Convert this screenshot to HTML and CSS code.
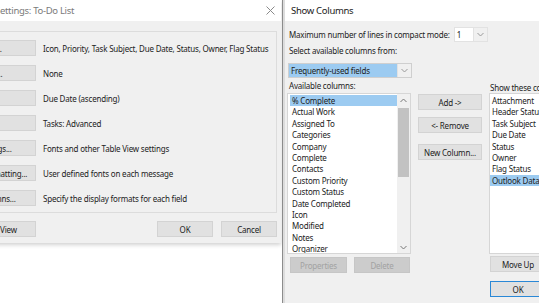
FILE: index.html
```html
<!DOCTYPE html>
<html lang="en">
<head>
  <meta charset="UTF-8">
  <title>Show Columns</title>
  <link rel="stylesheet" href="styles.css">
</head>
<body>
  <div class="screen">

    <section class="dlg view-settings">
      <header class="titlebar">
        <span class="title">Settings: To-Do List</span>
        <svg class="close" width="9" height="9" viewBox="0 0 9 9"><path d="M0.5 0.5L8.5 8.5M8.5 0.5L0.5 8.5" stroke="#8a8a8a" stroke-width="1"/></svg>
      </header>
      <div class="dlg-body">
        <div class="panel">
          <div class="row"><button class="btn side">Columns...</button><span class="desc">Icon, Priority, Task Subject, Due Date, Status, Owner, Flag Status</span></div>
          <div class="row"><button class="btn side">Group By...</button><span class="desc">None</span></div>
          <div class="row"><button class="btn side">Sort...</button><span class="desc">Due Date (ascending)</span></div>
          <div class="row"><button class="btn side">Filter...</button><span class="desc">Tasks: Advanced</span></div>
          <div class="row"><button class="btn side">Other Settings...</button><span class="desc">Fonts and other Table View settings</span></div>
          <div class="row"><button class="btn side">Conditional Formatting...</button><span class="desc">User defined fonts on each message</span></div>
          <div class="row"><button class="btn side">Format Columns...</button><span class="desc">Specify the display formats for each field</span></div>
        </div>
        <div class="footer-row">
          <button class="btn side">Reset Current View</button>
          <span class="spacer"></span>
          <button class="btn small">OK</button>
          <button class="btn small">Cancel</button>
        </div>
      </div>
    </section>

    <section class="dlg show-columns">
      <div class="sc-inner">
        <header class="titlebar active">
          <span class="title">Show Columns</span>
        </header>
        <div class="sc-body">
          <div class="line compact">
            <span>Maximum number of lines in compact mode:</span>
            <div class="combo">
              <span class="combo-value">1</span>
              <span class="combo-arrow"><svg width="7" height="5" viewBox="0 0 7 5"><path d="M0.5 1L3.5 4L6.5 1" fill="none" stroke="#999" stroke-width="1"/></svg></span>
            </div>
          </div>
          <div class="line label">Select available columns from:</div>
          <div class="combo wide">
            <span class="combo-value selected">Frequently-used fields</span>
            <span class="combo-arrow"><svg width="7" height="5" viewBox="0 0 7 5"><path d="M0.5 1L3.5 4L6.5 1" fill="none" stroke="#999" stroke-width="1"/></svg></span>
          </div>

          <div class="columns">
            <div class="col-label">Available columns:</div>
            <div class="col-label"></div>
            <div class="col-label right">Show these columns:</div>

            <div class="listbox available">
              <ul>
                <li class="sel">% Complete</li>
                <li>Actual Work</li>
                <li>Assigned To</li>
                <li>Categories</li>
                <li>Company</li>
                <li>Complete</li>
                <li>Contacts</li>
                <li>Custom Priority</li>
                <li>Custom Status</li>
                <li>Date Completed</li>
                <li>Icon</li>
                <li>Modified</li>
                <li>Notes</li>
                <li>Organizer</li>
              </ul>
              <div class="scrollbar">
                <svg class="arrow" width="7" height="5" viewBox="0 0 7 5"><path d="M0.5 4L3.5 1L6.5 4" fill="none" stroke="#777" stroke-width="1"/></svg>
                <div class="thumb"></div>
                <span class="track"></span>
                <svg class="arrow" width="7" height="5" viewBox="0 0 7 5"><path d="M0.5 1L3.5 4L6.5 1" fill="none" stroke="#777" stroke-width="1"/></svg>
              </div>
            </div>

            <div class="mid-buttons">
              <button class="btn mid">Add -&gt;</button>
              <button class="btn mid">&lt;- Remove</button>
              <button class="btn mid new">New Column...</button>
            </div>

            <div class="listbox shown">
              <ul>
                <li>Attachment</li>
                <li>Header Status</li>
                <li>Task Subject</li>
                <li>Due Date</li>
                <li>Status</li>
                <li>Owner</li>
                <li>Flag Status</li>
                <li class="sel">Outlook Data File</li>
              </ul>
            </div>

            <div class="list-actions">
              <button class="btn disabled">Properties</button>
              <button class="btn disabled">Delete</button>
            </div>
            <div></div>
            <div class="right-actions">
              <button class="btn small">Move Up</button>
              <button class="btn small default">OK</button>
            </div>
          </div>
        </div>
      </div>
    </section>

  </div>
</body>
</html>
```

FILE: styles.css
```css
* { box-sizing: border-box; }

html, body {
  margin: 0;
  padding: 0;
  width: 539px;
  height: 303px;
  overflow: hidden;
  background: #fff;
  font-family: 'Noto Sans', 'Open Sans', sans-serif;
  font-size: 8px;
  letter-spacing: -0.2px;
  color: #222;
}

.screen {
  display: flex;
  align-items: flex-start;
  width: 539px;
  height: 303px;
}

.btn {
  font-family: inherit;
  font-size: 8px;
  letter-spacing: -0.2px;
  color: #222;
  background: #e1e1e1;
  border: 1px solid #d3d3d3;
  height: 16px;
  padding: 0;
  margin: 0;
  white-space: nowrap;
  overflow: hidden;
}

.btn.disabled {
  background: #cccccc;
  border-color: #c6c6c6;
  color: #a2a2a2;
}

.btn.default {
  border-color: #2a88d6;
}

/* window chrome */
.titlebar {
  height: 21px;
  background: #fff;
  display: flex;
  align-items: center;
  font-size: 9.5px;
  letter-spacing: -0.3px;
  white-space: nowrap;
}

.view-settings .titlebar .title {
  color: #7a7a7a;
  padding-left: 75px;
}

.titlebar.active .title {
  color: #1a1a1a;
  padding-left: 6px;
}

.titlebar .close {
  margin-left: auto;
  margin-right: 6px;
}

/* left: view settings dialog */
.view-settings {
  flex: none;
  width: 361px;
  margin-left: -80px;
  box-shadow: 0 2px 4px rgba(0, 0, 0, 0.18);
}

.dlg-body {
  background: #f0f0f0;
  height: 222px;
  padding: 10px 4px 0 4px;
}

.panel {
  border: 1px solid #dcdcdc;
  height: 182px;
  padding: 8px 0 0 5px;
  display: flex;
  flex-direction: column;
  gap: 9px;
}

.row {
  display: flex;
  align-items: center;
  height: 16px;
  white-space: nowrap;
}

.btn.side {
  width: 106px;
  flex: none;
}

.desc {
  margin-left: 7px;
}

.footer-row {
  display: flex;
  align-items: center;
  margin-top: 8px;
  padding-left: 6px;
  gap: 8px;
}

.spacer { flex: 1; }

.btn.small {
  width: 56px;
}

/* right: show columns dialog */
.show-columns {
  flex: 1;
  align-self: stretch;
  margin-left: 1px;
  border-left: 1px solid #8c8c8c;
  display: flex;
}

.sc-inner {
  flex: 1;
  border-left: 2px solid #dcdcdc;
  display: flex;
  flex-direction: column;
}

.sc-body {
  flex: 1;
  background: #f0f0f0;
  padding: 6px 0 0 2px;
  white-space: nowrap;
}

.line {
  padding-left: 2px;
}

.compact {
  display: flex;
  align-items: center;
  gap: 4px;
}

.label {
  height: 12px;
  line-height: 12px;
  margin-top: 3px;
}

.combo {
  display: flex;
  height: 15px;
  border: 1px solid #e2e2e2;
  background: #fff;
}

.combo-value {
  width: 18px;
  padding-left: 2px;
  line-height: 13px;
}

.combo-arrow {
  width: 14px;
  background: #f0f0f0;
  display: flex;
  align-items: center;
  justify-content: center;
  border-left: 1px solid #e2e2e2;
}

.combo.wide {
  width: 124px;
  height: 15px;
  margin-top: 6px;
  margin-left: 1px;
  border-color: #cfcfcf;
}

.combo.wide .combo-value {
  width: 110px;
  padding-left: 2px;
}

.selected {
  background: #9ccbf1;
}

.columns {
  display: grid;
  grid-template-columns: 124px 64px 120px;
  column-gap: 7px;
  margin-top: 1px;
}

.col-label {
  height: 14px;
  line-height: 14px;
  padding-left: 2px;
}

.col-label.right {
  padding-left: 1px;
  padding-top: 2px;
}

.listbox {
  height: 161px;
  background: #fff;
  border: 1px solid #d6d6d6;
  display: flex;
  overflow: hidden;
}

.listbox ul {
  list-style: none;
  margin: 0;
  padding: 1px 0 0 2px;
  flex: 1;
}

.listbox li {
  height: 11.4px;
  line-height: 11.4px;
  padding-left: 2px;
}

.listbox li.sel {
  background: #9ccbf1;
}

.listbox.shown ul {
  padding-left: 0;
}

.scrollbar {
  width: 13px;
  background: #f0f0f0;
  display: flex;
  flex-direction: column;
  align-items: center;
  padding: 4px 0 3px;
}

.scrollbar .thumb {
  width: 11px;
  height: 69px;
  margin-top: 5px;
  background: #c2c2c2;
}

.scrollbar .track { flex: 1; }

.mid-buttons {
  display: flex;
  flex-direction: column;
  padding-top: 1px;
}

.btn.mid {
  width: 64px;
  margin-bottom: 7px;
}

.btn.mid.new {
  margin-top: 4px;
}

.list-actions {
  display: flex;
  gap: 7px;
  padding-left: 3px;
  margin-top: 3px;
}

.list-actions .btn:first-child { width: 57px; }
.list-actions .btn:last-child { width: 56px; }

.right-actions {
  display: flex;
  flex-direction: column;
  gap: 9px;
  margin-top: 2px;
  padding-left: 1px;
}
```
